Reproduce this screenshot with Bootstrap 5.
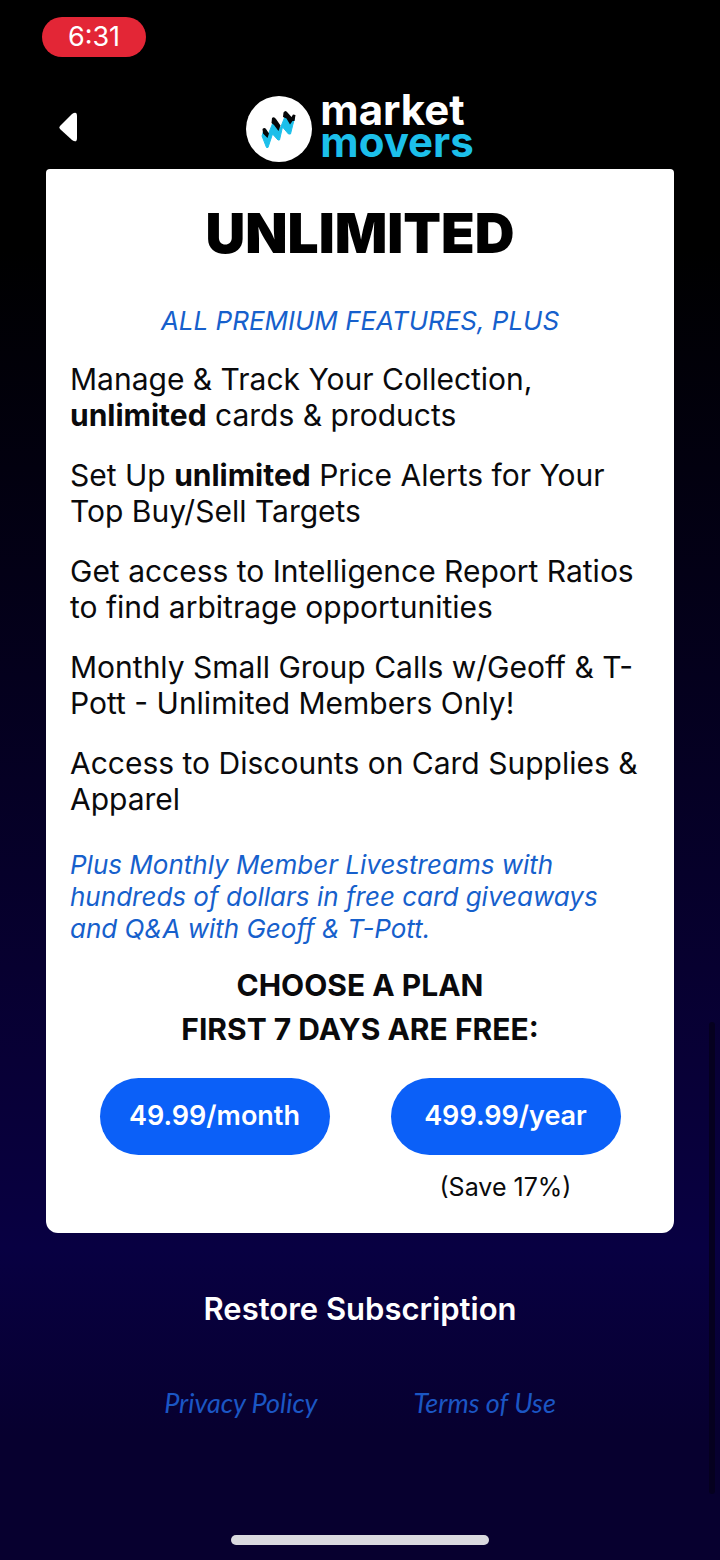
<!DOCTYPE html>
<html lang="en">
<head>
<meta charset="utf-8">
<meta name="viewport" content="width=device-width, initial-scale=1">
<title>Market Movers - Unlimited</title>
<link href="https://cdn.jsdelivr.net/npm/bootstrap@5.3.0/dist/css/bootstrap.min.css" rel="stylesheet">
<style>
  body {
    min-height: 100vh;
    font-family: Inter, Roboto, sans-serif;
    background: linear-gradient(#000 0%, #000 16%, #02000f 30%, #050024 50%, #080036 68%, #080042 80%, #07002f 92%, #07002f 100%) #07002f;
  }
  .status-time { background: #e32636; color: #fff; font-size: 27px; line-height: 40px; width: 104px; }
  .status-row { padding: 17px 42px 0; }
  .brand-row { display: grid; grid-template-columns: 1fr auto 1fr; padding: 37px 46px 5px; }
  .back-btn { width: 44px; height: 44px; }
  .brand-mark { width: 66px; height: 66px; }
  .brand-text { font-size: 42px; font-weight: 700; line-height: 32px; color: #fff; padding-bottom: 6px; }
  .brand-text .accent { color: #1cbfea; }
  .plan-card { margin: 0 46px; padding: 32px 24px 30px; border-radius: 4px 4px 12px 12px; color: #0a0a0c; }
  .plan-title { font-size: 55px; font-weight: 900; line-height: 64px; color: #000; }
  .blue-note { color: #1660cc; font-size: 26px; line-height: 32px; font-style: italic; }
  .tagline { margin-top: 40px; }
  .features { font-size: 30px; line-height: 36px; gap: 24px; margin-top: 24px; }
  .choose { font-size: 30px; line-height: 44px; font-weight: 700; margin-top: 18px; }
  .plans { gap: 61px; margin-top: 27px; }
  .buy-btn { width: 230px; height: 77px; background: #0b60f8; color: #fff; font-size: 27px; font-weight: 600; }
  .save { font-size: 25px; line-height: 32px; margin-top: 16px; }
  .restore { font-size: 31px; font-weight: 600; line-height: 40px; margin-top: 56px; }
  .legal { gap: 96px; margin-top: 56px; font-family: Lato, sans-serif; font-size: 27px; line-height: 36px; font-style: italic; }
  .legal a { color: #1b56c4; }
  .home-bar { width: 258px; height: 10px; background: #dadadf; margin-bottom: 15px; }
  .scroll-thumb { right: 5px; top: 1022px; width: 6px; height: 472px; background: #05001f; }
</style>
</head>
<body class="d-flex flex-column position-relative">
<div class="status-row"><div class="status-time rounded-pill text-center">6:31</div></div>
<header class="brand-row align-items-center">
  <button class="btn back-btn p-0 border-0 d-flex" aria-label="Back">
    <svg width="44" height="44" viewBox="0 0 44 44"><path d="M14 18L26 6Q31 2.500 31 8V30Q31 35.500 26 32L14 21Q12.500 19.500 14 18Z" transform="translate(0 1)" fill="#fff"/></svg>
  </button>
  <div class="d-flex align-items-center">
    <svg class="brand-mark" viewBox="0 0 66 66" aria-hidden="true">
      <circle cx="33" cy="33" r="33" fill="#fff"/>
      <path d="M16 40L18 34L22 39L28 24L34 33L40 18L44 26L48.500 22L44.500 38L42.500 38L36.500 31L33.500 44L32 44L26.500 38L22 51.500L20.500 51.500Z" fill="#1cbfea" stroke="#1cbfea" stroke-linejoin="round"/>
      <path d="M16.500 33Q18.500 31 20 33L23 37.500L21.500 42L17 37.500ZM26 22Q28 20 30 23L34.500 29.500L32.500 35L28 29L25.500 27ZM37.500 16.500Q39.500 13.500 41.500 16.500L45.500 21L47 18.500L49.500 19L48.500 25L46.500 25L44 28.500L40.500 22.500L37 21Z" fill="#050608"/>
    </svg>
    <div class="brand-text ms-2"><div>market</div><div class="accent">movers</div></div>
  </div>
</header>
<main>
  <section class="plan-card bg-white">
    <h1 class="plan-title text-center mb-0">UNLIMITED</h1>
    <p class="blue-note tagline text-center mb-0">ALL PREMIUM FEATURES, PLUS</p>
    <ul class="features list-unstyled d-flex flex-column mb-0">
      <li>Manage &amp; Track Your Collection, <strong>unlimited</strong> cards &amp; products</li>
      <li>Set Up <strong>unlimited</strong> Price Alerts for Your Top Buy/Sell Targets</li>
      <li>Get access to Intelligence Report Ratios to find arbitrage opportunities</li>
      <li>Monthly Small Group Calls w/Geoff &amp; T-Pott - Unlimited Members Only!</li>
      <li>Access to Discounts on Card Supplies &amp; Apparel</li>
    </ul>
    <p class="blue-note mt-4 pt-2 mb-0">Plus Monthly Member Livestreams with hundreds of dollars in free card giveaways and Q&amp;A with Geoff &amp; T-Pott.</p>
    <h2 class="choose text-center mb-0">CHOOSE A PLAN<br>FIRST 7 DAYS ARE FREE:</h2>
    <div class="plans d-flex justify-content-center">
      <div><button class="btn buy-btn rounded-pill border-0">49.99/month</button></div>
      <div class="text-center"><button class="btn buy-btn rounded-pill border-0">499.99/year</button><div class="save">(Save 17%)</div></div>
    </div>
  </section>
  <div class="text-center"><button class="btn restore text-white p-0 border-0">Restore Subscription</button></div>
  <nav class="legal d-flex justify-content-center">
    <a class="text-decoration-none" href="#privacy">Privacy Policy</a>
    <a class="text-decoration-none" href="#terms">Terms of Use</a>
  </nav>
</main>
<div class="home-bar rounded-pill mx-auto mt-auto"></div>
<div class="scroll-thumb position-absolute rounded-pill"></div>
<script src="https://cdn.jsdelivr.net/npm/bootstrap@5.3.0/dist/js/bootstrap.bundle.min.js"></script>
</body>
</html>
